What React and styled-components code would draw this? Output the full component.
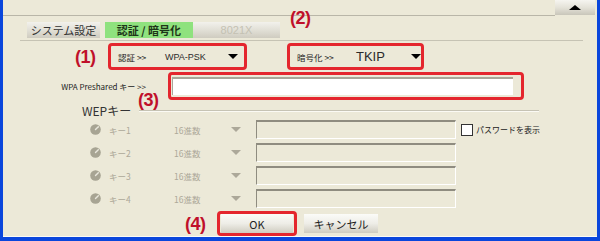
import React from 'react'
import styled, { createGlobalStyle } from 'styled-components'

const GlobalStyle = createGlobalStyle`
  html, body { margin: 0; padding: 0; background: #ece9d8; }
  body { font-family: "Noto Sans CJK JP", "Noto Sans", sans-serif; }
`

const Window = styled.div`
  position: relative;
  width: 600px;
  height: 241px;
  box-sizing: border-box;
  background: #ece9d8;
  border-left: 3px solid #0a46dc;
  border-right: 3px solid #0a46dc;
  border-bottom: 4px solid #0a46dc;
  box-shadow: inset 0 -1px 0 #fbfaf4;
  display: flex;
  flex-direction: column;
  overflow: hidden;
`

const TopBar = styled.div`
  display: flex;
  height: 16px;
`

const TopLine = styled.div`
  flex: 1;
  height: 15px;
  border-bottom: 1px solid #b9b6a8;
`

const CollapseButton = styled.div`
  width: 40px;
  height: 15px;
  margin-right: 2px;
  background: linear-gradient(#f6f5f0, #e4e2d8 50%, #c9c6ba);
  display: flex;
  align-items: center;
  justify-content: center;

  &::after {
    content: '';
    border-left: 6px solid transparent;
    border-right: 6px solid transparent;
    border-bottom: 5px solid #000;
  }
`

const TabStrip = styled.div`
  display: flex;
  margin: 6px 0 0 24px;
  height: 16px;
`

const Tab = styled.div`
  width: ${p => p.$w}px;
  margin-left: ${p => p.$gap || 0}px;
  height: 16px;
  display: flex;
  align-items: center;
  justify-content: center;
  font-size: 11px;
  font-weight: ${p => (p.$active ? 700 : 400)};
  color: ${p => (p.$disabled ? '#c4c1b3' : p.$active ? '#1e3518' : '#333')};
  background: ${p =>
    p.$active
      ? '#8fe27e'
      : 'linear-gradient(#f2f1ec, #dedcd2 60%, #cfccc0)'};
  font-family: ${p => (p.$disabled ? '"Liberation Sans", sans-serif' : 'inherit')};
`

const Divider = styled.div`
  margin: 2px 0 0 17px;
  width: 563px;
  height: 1px;
  background: #c6c3b4;
`

const Row = styled.div`
  display: flex;
  align-items: center;
  margin-top: ${p => p.$top || 0}px;
  padding-left: ${p => p.$pad || 0}px;
`

const Mark = styled.span`
  width: ${p => p.$w}px;
  font-family: "Liberation Sans", Arial, sans-serif;
  font-weight: 700;
  font-size: 18px;
  line-height: 18px;
  letter-spacing: -0.5px;
  color: #c0102a;
`

const FloatMark = styled(Mark)`
  position: absolute;
  left: ${p => p.$x}px;
  top: ${p => p.$y}px;
`

const RedBox = styled.div`
  box-sizing: border-box;
  width: ${p => p.$w}px;
  height: ${p => p.$h}px;
  margin-left: ${p => p.$gap || 0}px;
  border: 3px solid #e4262e;
  border-radius: 4px;
  display: flex;
  align-items: center;
  padding-left: ${p => p.$pad || 0}px;
`

const SmallLabel = styled.span`
  width: ${p => p.$w}px;
  font-size: 8.5px;
  color: #222;
  white-space: nowrap;
`

const Value = styled.span`
  width: ${p => p.$w}px;
  font-family: "Liberation Sans", Arial, sans-serif;
  font-size: ${p => p.$size || 9}px;
  color: #2a2a2a;
`

const Arrow = styled.span`
  width: 0;
  height: 0;
  border-left: 5px solid transparent;
  border-right: 5px solid transparent;
  border-top: 5px solid ${p => p.$color || '#000'};
`

const KeyCaption = styled.div`
  box-sizing: border-box;
  width: 165px;
  padding-right: 22px;
  text-align: right;
  font-size: 8px;
  color: #222;
  white-space: nowrap;
`

const TextInput = styled.div`
  box-sizing: border-box;
  width: 341px;
  height: 18px;
  margin-left: 1px;
  background: #fff;
  border-top: 2px solid #a9a699;
  border-left: 1px solid #a9a699;
`

const Group = styled.div`
  margin: 4px 0 0 77px;
`

const GroupHeader = styled.div`
  display: flex;
  align-items: center;
  height: 13px;
`

const GroupTitle = styled.span`
  font-size: 12px;
  color: #333;
  line-height: 13px;
  margin-left: 2px;
`

const GroupLine = styled.span`
  margin-left: 8px;
  width: 400px;
  height: 1px;
  background: #c6c3b4;
  box-shadow: 0 1px 0 #fbfaf4;
`

const KeyList = styled.div`
  display: flex;
  flex-direction: column;
  gap: 4px;
  margin-top: 3px;
`

const KeyRow = styled.div`
  display: flex;
  align-items: center;
  height: 19px;
  padding-left: 10px;
`

const Dim = styled.span`
  width: ${p => p.$w}px;
  font-size: 8.5px;
  color: #aca899;
  white-space: nowrap;
`

const DimInput = styled.div`
  box-sizing: border-box;
  width: 200px;
  height: 19px;
  margin-left: 15px;
  border-top: 2px solid #8f8c80;
  border-left: 1px solid #8f8c80;
  border-bottom: 1px solid #fff;
  border-right: 1px solid #fff;
`

const Check = styled.span`
  box-sizing: border-box;
  width: 12px;
  height: 12px;
  margin-left: 5px;
  background: #fff;
  border: 1px solid #333;
`

const CheckLabel = styled.span`
  margin-left: 3px;
  font-size: 8px;
  color: #222;
  white-space: nowrap;
`

const OkFrame = styled(RedBox)`
  padding: 1px;
`

const Button = styled.div`
  box-sizing: border-box;
  width: ${p => p.$w}px;
  height: ${p => p.$h}px;
  margin-left: ${p => p.$gap || 0}px;
  display: flex;
  align-items: center;
  justify-content: center;
  font-size: 11px;
  color: #222;
  background: linear-gradient(#fbfbf8, #eeede7 50%, #cfccc0);
`

const Radio = () => (
  <svg width="11" height="11" viewBox="0 0 11 11" style={{ marginRight: 8, flex: 'none' }}>
    <circle cx="5.5" cy="5.5" r="5.3" fill="#a7a493" />
    <line x1="5.5" y1="5.5" x2="8.3" y2="2.7" stroke="#e9e7dc" strokeWidth="1.4" strokeLinecap="round" />
  </svg>
)

const keys = ['キー1', 'キー2', 'キー3', 'キー4']

export default function App() {
  return (
    <Window>
      <GlobalStyle />
      <TopBar>
        <TopLine />
        <CollapseButton />
      </TopBar>

      <TabStrip>
        <Tab $w={73}>システム設定</Tab>
        <Tab $w={88} $gap={5} $active>認証 / 暗号化</Tab>
        <Tab $w={87} $disabled>8021X</Tab>
      </TabStrip>
      <Divider />

      <Row $top={2} $pad={72}>
        <Mark $w={33}>(1)</Mark>
        <RedBox $w={139} $h={27} $pad={7}>
          <SmallLabel $w={47}>認証 &gt;&gt;</SmallLabel>
          <Value $w={63}>WPA-PSK</Value>
          <Arrow />
        </RedBox>
        <RedBox $w={137} $h={27} $gap={40} $pad={7}>
          <SmallLabel $w={61}>暗号化 &gt;&gt;</SmallLabel>
          <Value $w={57} $size={13}>TKIP</Value>
          <Arrow />
        </RedBox>
      </Row>

      <Row $top={2}>
        <KeyCaption>WPA Preshared キー &gt;&gt;</KeyCaption>
        <RedBox $w={356} $h={28}>
          <TextInput />
        </RedBox>
      </Row>

      <Group>
        <GroupHeader>
          <GroupTitle>WEPキー</GroupTitle>
          <GroupLine />
        </GroupHeader>
        <KeyList>
          {keys.map((k, i) => (
            <KeyRow key={k}>
              <Radio />
              <Dim $w={65}>{k}</Dim>
              <Dim $w={57}>16進数</Dim>
              <Arrow $color="#aca899" />
              <DimInput />
              {i === 0 && (
                <>
                  <Check />
                  <CheckLabel>パスワードを表示</CheckLabel>
                </>
              )}
            </KeyRow>
          ))}
        </KeyList>
      </Group>

      <Row $top={3} $pad={182}>
        <Mark $w={32}>(4)</Mark>
        <OkFrame $w={80} $h={25}>
          <Button $w={72} $h={19}>OK</Button>
        </OkFrame>
        <Button $w={74} $h={19} $gap={7}>キャンセル</Button>
      </Row>

      <FloatMark $x={287} $y={9} $w={32}>(2)</FloatMark>
      <FloatMark $x={135} $y={91} $w={32}>(3)</FloatMark>
    </Window>
  )
}
